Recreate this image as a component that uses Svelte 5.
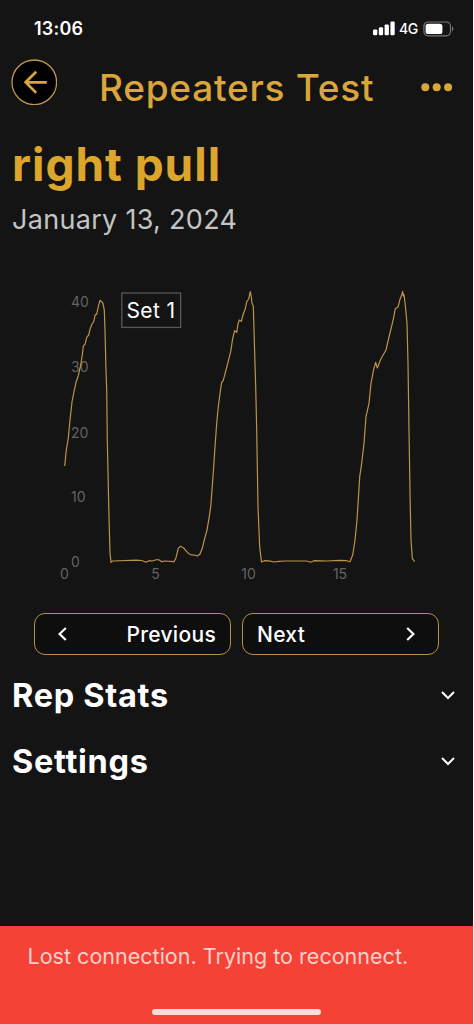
<script>
    let sections = [
        { title: 'Rep Stats', open: false },
        { title: 'Settings', open: false }
    ];

    const yTicks = [
        { label: '40', y: 22 },
        { label: '30', y: 87.3 },
        { label: '20', y: 152.5 },
        { label: '10', y: 217 },
        { label: '0', y: 282 }
    ];

    const xTicks = [
        { label: '0', x: 64.5 },
        { label: '5', x: 155.5 },
        { label: '10', x: 248.5 },
        { label: '15', x: 340 }
    ];

    // force curve, one array per rep
    const reps = [
        [
            64.7, 186, 66.3, 170, 68.3, 158, 70, 140, 72, 122, 73.3, 115, 76, 102.3, 78.3, 95.7, 80.7, 85,
            82.3, 75, 83.3, 66, 85, 64.3, 86.7, 57.3, 88.7, 55, 90, 49.3, 92, 44, 93.7, 41.7, 95.3, 34.7,
            96.7, 34.3, 98.3, 26.7, 100, 20.3, 102.7, 22.7, 104.3, 30, 105, 50, 105.9, 87, 106.7, 110,
            107.3, 160, 107.8, 183, 109, 237, 110, 273, 111, 282.3, 112.7, 281, 136.7, 280.2, 141.7, 280.5,
            146, 282.3, 149, 280.7, 152, 281, 157.3, 279.5, 159.3, 280, 161.7, 281.7, 165, 281, 174, 281.7
        ],
        [
            176, 277.7, 178.3, 268.3, 180.3, 266.3, 183.3, 267.7, 186.7, 271.7, 188.7, 273.7, 191.7, 275,
            195, 275.2, 197.3, 276, 200, 274, 202.3, 268.3, 204.7, 258.3, 207, 250, 209, 238.3, 210.7, 226.7,
            212, 210, 213.7, 186.7, 215, 166.7, 216.7, 143.3, 218.3, 126.7, 220.7, 108.3, 221.8, 102,
            223.2, 100.7, 226.7, 87.3, 230.7, 71.7, 232.7, 58.3, 234.7, 50.7, 236.7, 52.3, 238, 44,
            239.3, 40, 241.3, 41.3, 243.3, 34, 245.3, 28.7, 246.7, 21.7, 248.7, 19, 250.3, 11.7, 251.3, 16.7,
            252, 23.3, 253.3, 26, 254.3, 60, 255.7, 107, 256.7, 150, 258, 227, 259.7, 267, 261.5, 282,
            264.3, 280.7, 269, 280.9, 274, 282, 279, 281.4, 285, 281, 306.7, 281, 310.7, 282.2, 314, 280.7,
            326.7, 281, 340, 280.4, 346.7, 280.7, 350, 281.7
        ],
        [
            352.7, 275, 355, 260, 357, 240, 358.7, 213.3, 359.7, 196.7, 361.7, 183.3, 364, 163.3, 366, 136.7,
            369, 123.3, 371, 103.3, 373.7, 89.3, 375.7, 82.3, 377.3, 88, 380.7, 79.3, 386, 70, 388.3, 60,
            390.7, 50, 393.3, 39.3, 395.3, 28.7, 398, 27, 400, 19.3, 401.7, 15, 402.7, 11.3, 403.3, 16,
            404, 14.7, 405.3, 25, 407, 43.3, 408, 83.3, 409, 150, 410, 213.3, 411, 260, 412.3, 278.3, 414.7, 281.7
        ]
    ];
    const curve = reps.flat().join(' ');
</script>

<main class="screen">
    <div class="status-bar">
        <span class="time">13:06</span>
        <div class="status-icons">
            <svg width="23" height="15" viewBox="0 0 23 15" fill="#fff">
                <rect x="0" y="8.4" width="4.3" height="5.8" rx="1.2" />
                <rect x="5.8" y="6.2" width="4.3" height="8" rx="1.2" />
                <rect x="11.6" y="3.4" width="4.3" height="10.8" rx="1.2" />
                <rect x="17.4" y="0.6" width="4.3" height="13.6" rx="1.2" />
            </svg>
            <span class="network">4G</span>
            <svg class="battery" width="32" height="16" viewBox="0 0 32 16">
                <rect x="0.9" y="1" width="26.6" height="13.8" rx="4.2" fill="none" stroke="#777" stroke-width="1.2" />
                <rect x="2.6" y="2.7" width="16.8" height="10.4" rx="2.6" fill="#fff" />
                <path d="M29 5.6c1.9.7 1.9 3.9 0 4.6z" fill="#777" />
            </svg>
        </div>
    </div>

    <header>
        <button class="back" aria-label="Back">
            <svg width="46" height="46" viewBox="0 0 46 46" fill="none">
                <circle cx="23.3" cy="23.3" r="22.3" fill="#000" stroke="#c09650" stroke-width="1.3" />
                <path d="M35.8 23.3H14.8M25.2 12.7L14.6 23.3l10.6 10.6" stroke="#daa53a" stroke-width="2.7" />
            </svg>
        </button>
        <h1>Repeaters Test</h1>
        <button class="more" aria-label="More">
            <svg width="32" height="9" viewBox="0 0 32 9" fill="#daa53a">
                <circle cx="4.3" cy="4.2" r="4" />
                <circle cx="15.7" cy="4.2" r="4" />
                <circle cx="27.1" cy="4.2" r="4" />
            </svg>
        </button>
    </header>

    <h2>right pull</h2>
    <p class="date">January 13, 2024</p>

    <svg class="chart" width="473" height="310" viewBox="0 0 473 310">
        {#each yTicks as tick}
            <text x="71" y={tick.y + 5}>{tick.label}</text>
        {/each}
        {#each xTicks as tick}
            <text x={tick.x} y="298.5" text-anchor="middle">{tick.label}</text>
        {/each}
        <polyline points={curve} fill="none" stroke="#bd9348" stroke-width="1.2" stroke-linejoin="round" />
        <rect x="121.8" y="13" width="58.8" height="34.4" fill="#141414" stroke="#585858" stroke-width="1.3" />
        <text class="set-label" x="126.5" y="38">Set 1</text>
    </svg>

    <div class="pager">
        <button class="prev">
            <svg width="10" height="14" viewBox="0 0 10 14" fill="none" stroke="#fff" stroke-width="2.2">
                <path d="M8.8 1L2.6 7l6.2 6" />
            </svg>
            <span>Previous</span>
        </button>
        <button class="next">
            <span>Next</span>
            <svg width="10" height="14" viewBox="0 0 10 14" fill="none" stroke="#fff" stroke-width="2.2">
                <path d="M1.2 1l6.2 6-6.2 6" />
            </svg>
        </button>
    </div>

    {#each sections as section}
        <button class="section" on:click={() => (section.open = !section.open)}>
            <span>{section.title}</span>
            <svg width="14" height="10" viewBox="0 0 14 10" fill="none" stroke="#fff" stroke-width="2">
                <path d="M1 2l6 6 6-6" />
            </svg>
        </button>
    {/each}

    <div class="snackbar">
        <p>Lost connection. Trying to reconnect.</p>
        <div class="home-indicator"></div>
    </div>
</main>

<style>
    :global(body) {
        background: #fff;
    }

    .screen {
        display: flex;
        flex-direction: column;
        width: 473px;
        height: 1024px;
        background: #141414;
        color: #fff;
        font-family: Inter, sans-serif;
        overflow: hidden;
    }

    button {
        padding: 0;
        border: none;
        background: none;
        color: inherit;
        font-family: inherit;
        cursor: pointer;
    }

    svg {
        display: block;
        flex: none;
    }

    h1, h2, p {
        margin: 0;
        white-space: nowrap;
    }

    .status-bar {
        display: flex;
        justify-content: space-between;
        align-items: center;
        height: 57px;
        padding: 0 18px 0 34px;
    }

    .time {
        font-size: 18px;
        font-weight: 600;
        letter-spacing: 0.2px;
    }

    .status-icons {
        display: flex;
        align-items: center;
    }

    .network {
        width: 18px;
        margin: 0 6px 0 3px;
        font-size: 14px;
        font-weight: 500;
        letter-spacing: -0.4px;
    }

    header {
        display: flex;
        align-items: center;
        height: 60px;
        padding: 0 20px 0 11px;
    }

    .back {
        margin-bottom: 10px;
    }

    h1 {
        margin: 0 auto 0 42px;
        color: #daa53a;
        font-size: 37px;
        font-weight: 500;
        letter-spacing: 0.75px;
    }

    h2 {
        margin-top: 19px;
        padding-left: 12px;
        color: #dca52c;
        font-size: 46px;
        font-weight: 700;
        line-height: 56px;
        letter-spacing: 0.95px;
    }

    .date {
        margin-top: 9px;
        padding-left: 12px;
        color: #c4c4c4;
        font-size: 27px;
        line-height: 38px;
        letter-spacing: 0.3px;
    }

    .chart {
        margin-top: 41px;
    }

    .chart text {
        fill: #636363;
        font-size: 14px;
    }

    .chart .set-label {
        fill: #fff;
        font-size: 21px;
        letter-spacing: 0.4px;
    }

    .pager {
        display: flex;
        gap: 11px;
        margin: 23px 34px 0;
    }

    .pager button {
        display: flex;
        justify-content: space-between;
        align-items: center;
        box-sizing: border-box;
        width: 197px;
        height: 42px;
        border: 1.5px solid #b98d4c;
        border-radius: 11px;
        background: #0e0e0e;
        font-size: 21px;
        font-weight: 500;
        letter-spacing: 0.3px;
    }

    .pager .prev {
        padding: 0 14px 0 22px;
    }

    .pager .next {
        padding: 0 22px 0 14px;
    }

    .section {
        display: flex;
        justify-content: space-between;
        align-items: center;
        height: 66px;
        padding: 0 18px 0 12px;
        font-size: 32.5px;
        font-weight: 700;
        letter-spacing: 0.7px;
    }

    .pager + .section {
        margin-top: 7px;
    }

    .snackbar {
        display: flex;
        flex-direction: column;
        justify-content: space-between;
        align-items: center;
        box-sizing: border-box;
        height: 98px;
        margin-top: auto;
        padding: 15px 0 9px;
        background: #f44336;
    }

    .snackbar p {
        align-self: flex-start;
        padding-left: 27.5px;
        color: #ffcfcb;
        font-size: 21.5px;
        line-height: 30px;
        letter-spacing: 0.02px;
    }

    .home-indicator {
        width: 169px;
        height: 6px;
        border-radius: 3px;
        background: #ffdbd8;
    }
</style>
